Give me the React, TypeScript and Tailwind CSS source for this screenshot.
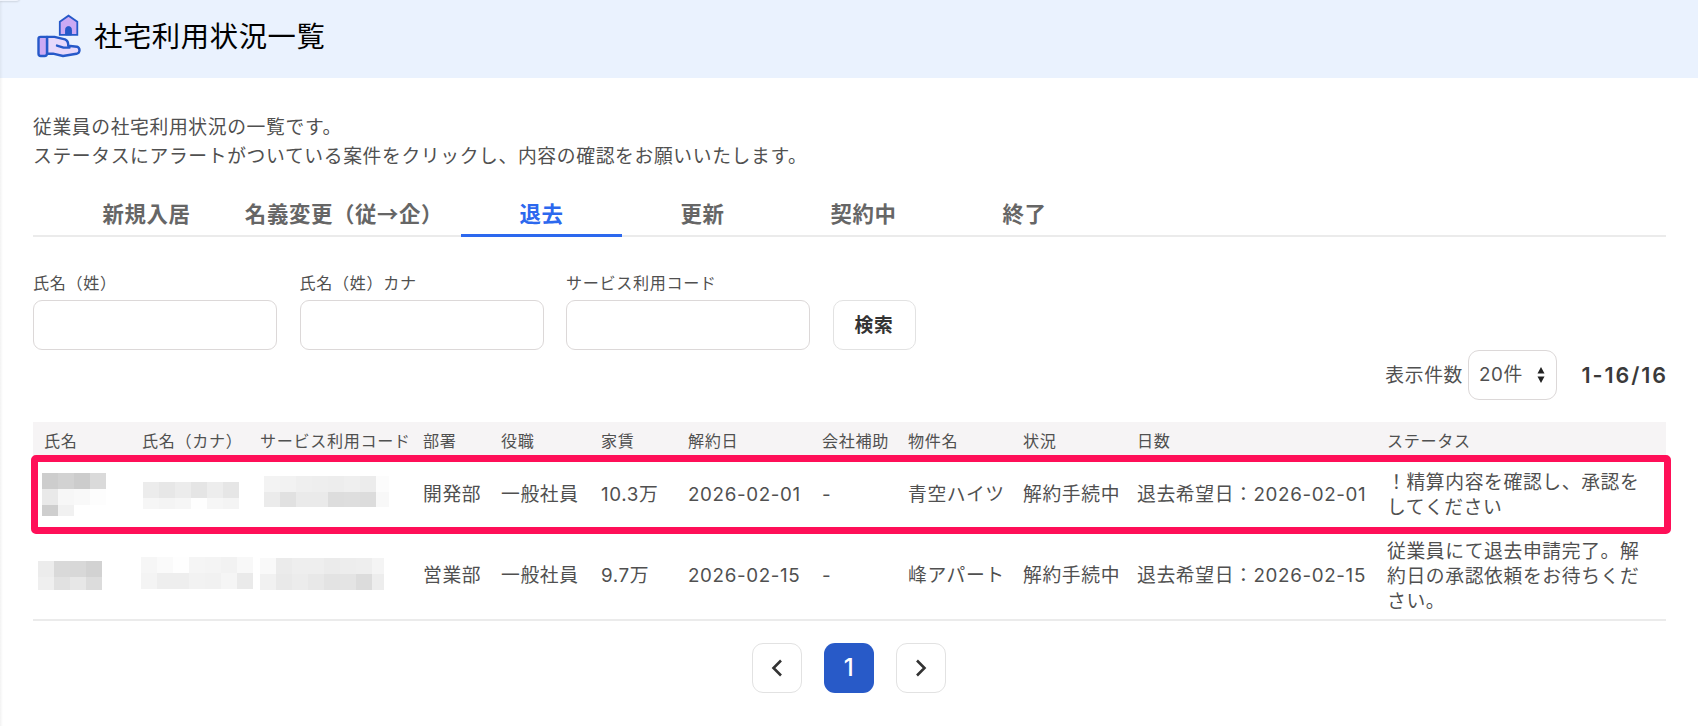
import clsx from "clsx";

const tabs = [
  { label: "新規入居", width: "w-[161px]" },
  { label: "名義変更（従→企）", width: "w-[234px]" },
  { label: "退去", width: "w-[161px]", active: true },
  { label: "更新", width: "w-[161px]" },
  { label: "契約中", width: "w-[161px]" },
  { label: "終了", width: "w-[161px]" },
];

const headers = [
  "氏名",
  "氏名（カナ）",
  "サービス利用コード",
  "部署",
  "役職",
  "家賃",
  "解約日",
  "会社補助",
  "物件名",
  "状況",
  "日数",
  "ステータス",
];

const columns =
  "grid grid-cols-[98px_118px_163px_78px_100px_87px_134px_86px_115px_114px_250px_256px] pl-[11px]";

// Masked personal data, one grey level per block
type Mask = { offset: string; cols: string; rows: string; cells: string[] };

const rows: { masks: Mask[]; values: string[]; status: string; height: string; highlighted?: boolean }[] = [
  {
    masks: [
      {
        offset: "-ml-[2px] mt-[17px]",
        cols: "grid-cols-[16px_16px_16px_16px]",
        rows: "grid-rows-[16px_16px_11px]",
        cells: ["#cdcdcd", "#d2d2d2", "#cccccc", "#dadada", "#e9e9e9", "#f7f7f7", "#f9f9f9", "#fdfdfd", "#cecece", "#f1f1f1", "#ffffff", "#ffffff"],
      },
      {
        offset: "ml-[1px] mt-[26px]",
        cols: "grid-cols-[16px_16px_16px_16px_16px_16px]",
        rows: "grid-rows-[16px_11px]",
        cells: ["#ececec", "#e7e7e7", "#ececec", "#e5e5e5", "#ededed", "#e6e6e6", "#f6f6f6", "#f4f4f4", "#f6f6f6", "#fefefe", "#f6f6f6", "#f4f4f4"],
      },
      {
        offset: "ml-[4px] mt-[20px]",
        cols: "grid-cols-[16px_16px_16px_16px_16px_16px_16px_13px]",
        rows: "grid-rows-[16px_15px]",
        cells: ["#f3f3f3", "#f2f2f2", "#efefef", "#eeeeee", "#ededed", "#efefef", "#ececec", "#fcfcfc", "#ebebeb", "#e1e1e1", "#eaeaea", "#eaeaea", "#dddddd", "#dedede", "#dcdcdc", "#f8f8f8"],
      },
    ],
    values: ["開発部", "一般社員", "10.3万", "2026-02-01", "-", "青空ハイツ", "解約手続中", "退去希望日：2026-02-01"],
    status: "！精算内容を確認し、承認をしてください",
    height: "h-[76px]",
    highlighted: true,
  },
  {
    masks: [
      {
        offset: "-ml-[6px] mt-[29px]",
        cols: "grid-cols-[16px_16px_16px_16px]",
        rows: "grid-rows-[16px_13px]",
        cells: ["#ececec", "#d9d9d9", "#d8d8d8", "#d2d2d2", "#efefef", "#e1e1e1", "#e7e7e7", "#dcdcdc"],
      },
      {
        offset: "-ml-[1px] mt-[25px]",
        cols: "grid-cols-[16px_16px_16px_16px_16px_16px_16px]",
        rows: "grid-rows-[16px_16px]",
        cells: ["#f6f6f6", "#fafafa", "#fefefe", "#f5f5f5", "#f4f4f4", "#f2f2f2", "#f8f8f8", "#f4f4f4", "#eeeeee", "#eeeeee", "#f2f2f2", "#f1f1f1", "#f5f5f5", "#eaeaea"],
      },
      {
        offset: "mt-[26px]",
        cols: "grid-cols-[16px_16px_16px_16px_16px_16px_16px_12px]",
        rows: "grid-rows-[16px_16px]",
        cells: ["#f9f9f9", "#ebebeb", "#eeeeee", "#eeeeee", "#ebebeb", "#ededed", "#eeeeee", "#f4f4f4", "#f1f1f1", "#e9e9e9", "#ececec", "#e8e8e8", "#e3e3e3", "#e4e4e4", "#dcdcdc", "#ededed"],
      },
    ],
    values: ["営業部", "一般社員", "9.7万", "2026-02-15", "-", "峰アパート", "解約手続中", "退去希望日：2026-02-15"],
    status: "従業員にて退去申請完了。解約日の承認依頼をお待ちください。",
    height: "h-[87px]",
  },
];

function HouseHandIcon() {
  return (
    <svg
      className="h-[44px] w-[44px] shrink-0"
      viewBox="0 0 44 44"
      stroke="#2659c9"
      strokeWidth={2.4}
      strokeLinejoin="round"
      strokeLinecap="round"
    >
      <path d="M22.8 7.7 31.5 1.7 40.3 7.7V20.9H22.8Z" fill="#ccaaf4" strokeWidth={1.8} strokeLinejoin="miter" />
      <path d="M28.6 20.5V15.5a2.9 2.9 0 0 1 5.8 0v5Z" fill="#2659c9" strokeWidth={1} />
      <path
        d="M10 22.9H17.5L28 25.3Q31.6 26.8 31.2 31.8L40 32.7Q42.6 33.7 42.5 36.5Q42.3 39.2 39.5 39.8L26 42 16 39.7H10Z"
        fill="#e7d8fb"
      />
      <path d="M20 31.6 26.5 33.6H32.5" fill="none" />
      <path d="M3.5 22.9H10V39.5Q10 42 7.5 42H3.7Q1.5 42 1.5 39.8V24.9Q1.5 22.9 3.5 22.9Z" fill="#ccaaf4" />
    </svg>
  );
}

function Masked({ mask }: { mask: Mask }) {
  return (
    <div className={clsx("grid self-start", mask.offset, mask.cols, mask.rows)}>
      {mask.cells.map((color, i) => (
        <span key={i} style={{ backgroundColor: color }} />
      ))}
    </div>
  );
}

function Field({ label }: { label: string }) {
  return (
    <label className="flex w-[244px] flex-col">
      <span className="h-[29px] text-[16.1px] leading-[24px]">{label}</span>
      <input className="h-[50px] rounded-[9px] border-[1.5px] border-[#dcd8d8] bg-white px-3 outline-none" />
    </label>
  );
}

export default function App() {
  return (
    <div className="relative h-[726px] w-[1698px] overflow-hidden bg-white font-['Inter','Noto_Sans_CJK_JP',sans-serif] text-[18.8px] tracking-[0.034em] text-[#505050]">
      {/* Edge of the side menu */}
      <div className="absolute top-0 left-0 h-full w-[3px] bg-gradient-to-r from-black/5 to-transparent" />
      <div className="absolute -top-1 left-0 h-[5px] w-[20px] rounded-br bg-[#f1f5fd] shadow-[0_1px_2px_rgba(0,0,0,0.12)]" />

      <header className="flex h-[78px] items-center gap-[13px] bg-[#eaf2fe] pl-[37px]">
        <div className="-mt-[7px]">
          <HouseHandIcon />
        </div>
        <h1 className="-mt-[4px] text-[28.3px] leading-none text-black">社宅利用状況一覧</h1>
      </header>

      <main className="px-[33px]">
        <p className="mt-[35px] leading-[29px]">
          従業員の社宅利用状況の一覧です。
          <br />
          ステータスにアラートがついている案件をクリックし、内容の確認をお願いいたします。
        </p>

        <nav className="mt-[22px] flex h-[44px] w-[1633px] border-b-2 border-[#ebebeb] pl-[33px] font-['Noto_Sans_CJK_JP',sans-serif] text-[21.4px] font-bold text-[#666]">
          {tabs.map((tab) => (
            <button
              key={tab.label}
              className={clsx(
                "-mb-[2px] flex h-[44px] items-center justify-center border-b-[3px] whitespace-nowrap",
                tab.width,
                tab.active ? "border-[#2c68ee] text-[#2c68ee]" : "border-transparent"
              )}
            >
              {tab.label}
            </button>
          ))}
        </nav>

        <form className="mt-[34px] flex items-end gap-[22.5px]">
          <Field label="氏名（姓）" />
          <Field label="氏名（姓）カナ" />
          <Field label="サービス利用コード" />
          <button
            type="button"
            className="h-[50px] w-[83px] rounded-[10px] border-[1.5px] border-[#e2e2e2] pt-[2px] text-[18.8px] font-bold text-[#333]"
          >
            検索
          </button>
        </form>

        <div className="flex h-[50px] w-[1633px] items-center justify-end">
          <span className="pt-[2px]">表示件数</span>
          <div className="ml-[5px] flex h-[50px] w-[89px] items-center rounded-[11px] border-[1.5px] border-[#dcd8d8] pl-[10px]">
            <span className="w-[46px] pt-px whitespace-nowrap">20件</span>
            <svg className="ml-[12px] h-[18px] w-[8px] shrink-0" viewBox="0 0 8 18" fill="#222">
              <path d="M4 1 7.5 7.5H.5Z" />
              <path d="M4 17 .5 10.5h7Z" />
            </svg>
          </div>
          <span className="-mr-[2px] ml-[23px] w-[88px] pt-px text-right text-[21.5px] font-semibold tracking-[0.09em] whitespace-nowrap text-[#3a3a3a]">
            1-16/16
          </span>
        </div>

        <section className="mt-[22px] w-[1633px] border-b-2 border-[#ebebeb]">
          <div className={clsx(columns, "h-[34px] items-center bg-[#f6f4f5] pt-[5px] text-[16.1px] whitespace-nowrap")}>
            {headers.map((header) => (
              <span key={header}>{header}</span>
            ))}
          </div>
          {rows.map((row) => (
            <div key={row.values[3]} className={clsx(columns, row.height, "relative items-center")}>
              {row.masks.map((mask, i) => (
                <Masked key={i} mask={mask} />
              ))}
              {row.values.map((value, i) => (
                <span key={i} className="pt-[2px] whitespace-nowrap">
                  {value}
                </span>
              ))}
              <span className="pt-[2px] leading-[25px]">{row.status}</span>
              {row.highlighted && (
                <div className="absolute -top-px -left-[2px] h-[79px] w-[1640px] rounded-[5px] border-[7px] border-[#ff0f58]" />
              )}
            </div>
          ))}
        </section>

        <div className="mt-[22px] flex w-[1632px] justify-center gap-[22px] text-[#333]">
          <button className="flex h-[50px] w-[50px] items-center justify-center rounded-[11px] border-[1.5px] border-[#e2e2e2]">
            <svg className="h-[18px] w-[12px]" viewBox="0 0 12 18" fill="none" stroke="currentColor" strokeWidth={2.6}>
              <path d="M10 1.5 2.5 9l7.5 7.5" />
            </svg>
          </button>
          <button className="flex h-[50px] w-[50px] items-center justify-center rounded-[11px] bg-[#285ac8] text-[24px] font-medium text-white">
            1
          </button>
          <button className="flex h-[50px] w-[50px] items-center justify-center rounded-[11px] border-[1.5px] border-[#e2e2e2]">
            <svg className="h-[18px] w-[12px]" viewBox="0 0 12 18" fill="none" stroke="currentColor" strokeWidth={2.6}>
              <path d="M2 1.5 9.5 9 2 16.5" />
            </svg>
          </button>
        </div>
      </main>
    </div>
  );
}
